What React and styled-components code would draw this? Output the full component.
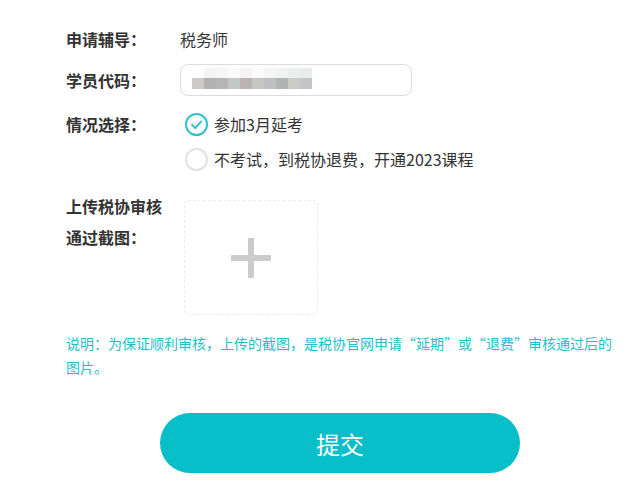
import React from "react";
import styled, { createGlobalStyle } from "styled-components";

const GlobalStyle = createGlobalStyle`
  body {
    margin: 0;
    background: #fff;
    font-family: "Noto Sans CJK SC", "Noto Sans", sans-serif;
    color: #333;
  }
`;

const Page = styled.div`
  width: 548px;
  padding: 28px 22px 30px 66px;
`;

const Row = styled.div`
  display: flex;
  align-items: ${props => props.$top ? "flex-start" : "center"};
  margin-top: ${props => props.$gap || 0}px;
`;

const Label = styled.div`
  width: 114px;
  flex-shrink: 0;
  font-size: 16px;
  font-weight: bold;
  line-height: ${props => props.$lh || 22}px;
  margin-top: ${props => props.$shift || 0}px;
  color: #333;
`;

const Value = styled.div`
  font-size: 16px;
  line-height: 22px;
`;

const CodeInput = styled.div`
  box-sizing: border-box;
  width: 232px;
  height: 32px;
  border: 1px solid #dcdcdc;
  border-radius: 8px;
  padding: 3px 0 0 11px;
`;

const Mosaic = styled.div`
  display: flex;
  flex-direction: column;
`;

const MosaicLine = styled.div`
  display: flex;
  padding-left: ${props => props.$indent || 0}px;
`;

const Cell = styled.span`
  width: 12px;
  height: ${props => props.$h}px;
  background: ${props => props.$c};
`;

const RadioGroup = styled.div`
  display: flex;
  flex-direction: column;
  gap: 11px;
`;

const Option = styled.label`
  display: flex;
  align-items: center;
  gap: 6px;
  height: 24px;
  font-size: 16px;
  color: #333;
  padding-left: 5px;
`;

const Circle = styled.span`
  box-sizing: border-box;
  width: 23px;
  height: 23px;
  border-radius: 50%;
  border: 2px solid ${props => props.$on ? "#2dc3cc" : "#e2e2e2"};
  display: flex;
  align-items: center;
  justify-content: center;
`;

const Upload = styled.div`
  box-sizing: border-box;
  margin-left: 4px;
  width: 134px;
  height: 115px;
  border: 1px dashed #ececec;
  border-radius: 4px;
  display: flex;
  align-items: center;
  justify-content: center;
`;

const Plus = styled.div`
  position: relative;
  width: 40px;
  height: 40px;
  &::before, &::after {
    content: "";
    position: absolute;
    background: #cccccc;
  }
  &::before { left: 0; top: 17px; width: 40px; height: 6px; }
  &::after { top: 0; left: 17px; width: 6px; height: 40px; }
`;

const Note = styled.p`
  margin: 16px 0 0;
  font-size: 14px;
  line-height: 24px;
  color: #1ebfca;
`;

const Submit = styled.button`
  display: block;
  margin: 34px auto 0;
  width: 360px;
  height: 60px;
  border: none;
  border-radius: 30px;
  background: #08bec8;
  color: #fff;
  font-family: inherit;
  font-size: 24px;
  cursor: pointer;
`;

const topCells = ["#f3f3f3", "#f6f6f6", "#fafafa", "#f4f4f4", "#fbfbfb", "#f5f5f5", "#f1f2f2", "#eceeee", "#e9eced"];
const bottomCells = ["#cdc9c6", "#b3b1b1", "#b7b6b6", "#c2c8c6", "#bcb3b4", "#c8c6c0", "#c0bfc3", "#b1b4b3", "#cdcbc7", "#c3c5c9"];

export default function App() {
  return (
    <Page>
      <GlobalStyle />
      <Row>
        <Label>申请辅导：</Label>
        <Value>税务师</Value>
      </Row>
      <Row $gap={14}>
        <Label>学员代码：</Label>
        <CodeInput>
          <Mosaic>
            <MosaicLine $indent={12}>
              {topCells.map((c, i) => <Cell key={i} $c={c} $h={10} />)}
            </MosaicLine>
            <MosaicLine>
              {bottomCells.map((c, i) => <Cell key={i} $c={c} $h={11} />)}
            </MosaicLine>
          </Mosaic>
        </CodeInput>
      </Row>
      <Row $gap={16} $top>
        <Label $lh={24}>情况选择：</Label>
        <RadioGroup>
          <Option>
            <Circle $on>
              <svg width="15" height="15" viewBox="0 0 15 15">
                <path d="M3 7.8 L6.2 11 L12 4.6" fill="none" stroke="#2dc3cc" strokeWidth="2" strokeLinecap="round" strokeLinejoin="round" />
              </svg>
            </Circle>
            参加3月延考
          </Option>
          <Option>
            <Circle />
            不考试，到税协退费，开通2023课程
          </Option>
        </RadioGroup>
      </Row>
      <Row $gap={29} $top>
        <Label $lh={31} $shift={-9}>上传税协审核<br />通过截图：</Label>
        <Upload>
          <Plus />
        </Upload>
      </Row>
      <Note>说明：为保证顺利审核，上传的截图，是税协官网申请“延期”或“退费”审核通过后的图片。</Note>
      <Submit>提交</Submit>
    </Page>
  );
}
